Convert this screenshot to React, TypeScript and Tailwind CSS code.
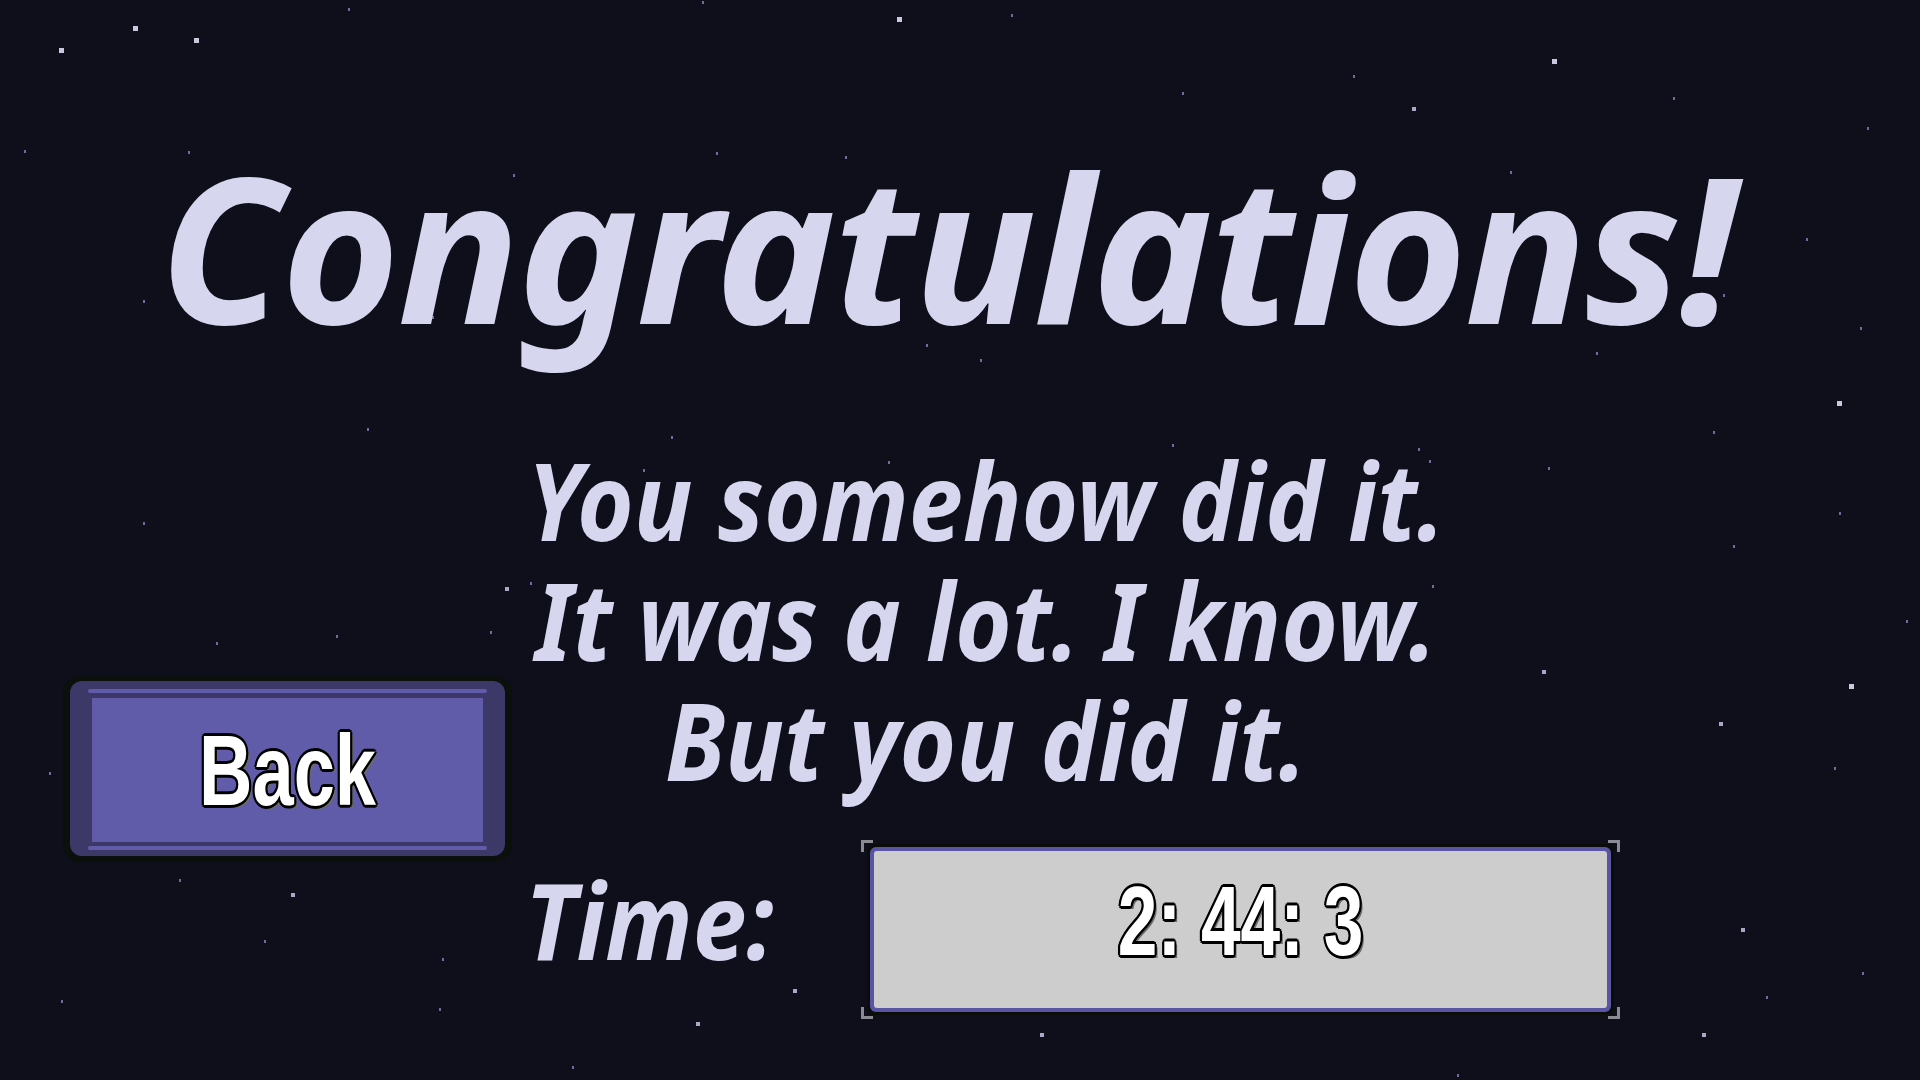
import React from "react";

// star field: [x, y, size] where size 1 = dim speck, 2 = mid, 3 = bright
const stars: [number, number, number][] = [
  [348, 8, 1], [702, 1, 1], [897, 17, 3], [133, 26, 3], [194, 38, 3], [59, 48, 3],
  [24, 150, 1], [188, 151, 1], [716, 152, 1], [845, 156, 1], [513, 174, 1],
  [143, 300, 1], [433, 294, 1], [432, 316, 1], [926, 344, 1], [367, 428, 1],
  [671, 436, 1], [888, 461, 1], [643, 469, 1], [143, 522, 1],
  [1011, 14, 1], [1552, 59, 3], [1353, 75, 1], [1182, 92, 1], [1412, 107, 2],
  [1673, 97, 1], [1867, 127, 1], [1510, 171, 1], [1806, 238, 1], [1723, 294, 1],
  [1860, 327, 1], [980, 359, 1], [1596, 352, 1], [1837, 401, 3], [1713, 431, 1],
  [1172, 444, 1], [1418, 448, 1], [1429, 460, 1], [1548, 467, 1], [1839, 512, 1],
  [1733, 545, 1], [1432, 585, 1], [1906, 620, 1], [1542, 670, 2], [1849, 684, 3],
  [1719, 722, 2], [1834, 767, 1], [1741, 928, 2], [1862, 972, 1], [1766, 996, 1],
  [1702, 1033, 2], [1040, 1033, 2], [1457, 1074, 1],
  [505, 587, 2], [530, 582, 1], [490, 631, 1], [216, 642, 1], [336, 635, 1],
  [49, 772, 1], [179, 879, 1], [291, 893, 2], [264, 940, 1], [442, 958, 1],
  [61, 1000, 1], [439, 1008, 1], [793, 989, 2], [696, 1022, 2], [572, 1066, 1],
];

const starClass: Record<number, string> = {
  1: "h-[3px] w-[2px] bg-[#6e6c9c]",
  2: "h-[4px] w-[4px] bg-[#a9a8c8]",
  3: "h-[5px] w-[5px] bg-[#c9c8de]",
};

// white label text with a hard black outline and a grey drop
const outline =
  "[text-shadow:-3px_0_0_#000,3px_0_0_#000,0_-3px_0_#000,0_3px_0_#000,-2px_-2px_0_#000,2px_-2px_0_#000,-2px_2px_0_#000,2px_2px_0_#000,4px_3px_0_#6b6b6b]";

const Corner: React.FC<{ pos: string }> = ({ pos }) => (
  <span className={`absolute h-[12px] w-[12px] border-[#8b8b93] ${pos}`} />
);

export default function App() {
  return (
    <main className="relative h-[1080px] w-full overflow-hidden bg-[#0f0f1b] font-['Noto_Sans','Open_Sans',sans-serif] text-[#d6d6ee]">
      {/* stars */}
      <div className="absolute inset-0">
        {stars.map(([x, y, s], i) => (
          <span
            key={i}
            className={`absolute ${starClass[s]}`}
            style={{ left: x, top: y }}
          />
        ))}
      </div>

      <div className="relative flex flex-col">
        <h1 className="pt-[144px] pr-[26px] text-center text-[203px] font-bold italic leading-none tracking-[-2.5px]">
          Congratulations!
        </h1>

        <div className="mt-[93px] flex items-start">
          {/* back button */}
          <div className="w-[512px] shrink-0 pl-[63px] pt-[236px]">
            <button className="block h-[186px] w-[449px] rounded-[16px] bg-[#0c100c] px-[7px] pt-[5px] pb-[6px]">
              <div className="flex h-full flex-col rounded-[12px] bg-[#3c3969] px-[18px] pt-[8px] pb-[6px]">
                <div className="h-[4px] rounded-full bg-[#605ca9]" />
                <div className="mx-[4px] mt-[5px] flex h-[144px] items-center justify-center bg-[#605ca9]">
                  <span
                    className={`inline-block scale-x-[0.74] font-['Liberation_Sans',Arial,sans-serif] text-[100px] font-bold leading-none text-white ${outline}`}
                  >
                    Back
                  </span>
                </div>
                <div className="mt-[4px] h-[4px] rounded-full bg-[#605ca9]" />
              </div>
            </button>
          </div>

          <div className="flex flex-col items-start">
            <div className="flex w-[948px] scale-x-[0.9] flex-col items-center whitespace-nowrap text-[108px] font-bold italic leading-[120px]">
              <p>You somehow did it.</p>
              <p>It was a lot. I know.</p>
              <p>But you did it.</p>
            </div>

            {/* time row */}
            <div className="mt-[40px] flex items-start pl-[13px]">
              <span className="mt-[27px] inline-block w-[336px] origin-left scale-x-[0.92] whitespace-nowrap text-[105px] font-bold italic leading-none">
                Time:
              </span>
              <div className="relative h-[179px] w-[759px] px-[6px] py-[4px]">
                <Corner pos="left-0 top-0 border-l-[3px] border-t-[3px]" />
                <Corner pos="right-0 top-0 border-r-[3px] border-t-[3px]" />
                <Corner pos="left-0 bottom-0 border-l-[3px] border-b-[3px]" />
                <Corner pos="right-0 bottom-0 border-r-[3px] border-b-[3px]" />
                <div className="h-full rounded-[7px] bg-[#0a0d0a] p-[3px]">
                  <div className="h-full rounded-[6px] bg-[#5955a3] p-[4px]">
                    <div className="flex h-full items-center justify-center rounded-[3px] bg-[#cdcdcd] pb-[18px]">
                      <span
                        className={`inline-block scale-x-[0.72] whitespace-nowrap font-['Liberation_Sans',Arial,sans-serif] text-[99px] font-bold leading-none text-white ${outline}`}
                      >
                        2: 44: 3
                      </span>
                    </div>
                  </div>
                </div>
              </div>
            </div>
          </div>
        </div>
      </div>
    </main>
  );
}
